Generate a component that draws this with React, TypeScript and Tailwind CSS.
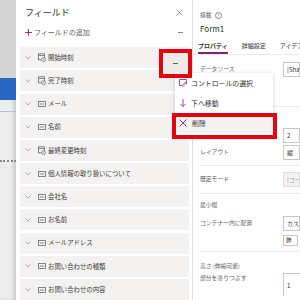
import React from "react";

type Field = {
    label: string;
    kind: "text" | "date";
}

const fields: Field[] = [
    { label: "開始時刻", kind: "date" },
    { label: "完了時刻", kind: "date" },
    { label: "メール", kind: "text" },
    { label: "名前", kind: "text" },
    { label: "最終変更時刻", kind: "date" },
    { label: "個人情報の取り扱いについて", kind: "text" },
    { label: "会社名", kind: "text" },
    { label: "お名前", kind: "text" },
    { label: "メールアドレス", kind: "text" },
    { label: "お問い合わせの種類", kind: "text" },
    { label: "お問い合わせの内容", kind: "text" },
]

const Chevron = () => (
    <svg width="6" height="4" viewBox="0 0 6 4" className="shrink-0">
        <path d="M0.5 0.5 L3 3 L5.5 0.5" fill="none" stroke="#b89bc4" strokeWidth="0.9" />
    </svg>
)

const TextIcon = () => (
    <svg width="8" height="6" viewBox="0 0 8 6" className="shrink-0">
        <rect x="0.5" y="0.5" width="7" height="5" fill="none" stroke="#6b6b6b" strokeWidth="0.8" />
        <path d="M1.8 3 H6.2" stroke="#8a8a8a" strokeWidth="1" />
    </svg>
)

const DateIcon = () => (
    <svg width="8" height="9" viewBox="0 0 8 9" className="shrink-0">
        <rect x="0.5" y="0.8" width="6" height="6" fill="none" stroke="#6b6b6b" strokeWidth="0.8" />
        <path d="M0.5 2.5 H6.5" stroke="#6b6b6b" strokeWidth="0.8" />
        <circle cx="5.6" cy="6.6" r="1.9" fill="#fff" stroke="#6b6b6b" strokeWidth="0.8" />
        <path d="M5.6 5.8 V6.7 H6.3" fill="none" stroke="#6b6b6b" strokeWidth="0.6" />
    </svg>
)

const FieldRow: React.FC<Field> = (props) => {
    return (
        <div className="h-[21px] flex items-center bg-[#f3f2f1] pl-[5px]">
            <Chevron />
            <div className="ml-[6px] w-[10px] flex justify-center">
                {props.kind === "date" ? <DateIcon /> : <TextIcon />}
            </div>
            <span className="ml-[1px] text-[6.4px] text-[#3b3a39] whitespace-nowrap">{props.label}</span>
        </div>
    )
}

const PropRow = (props: { label: string; value?: string; h?: string; muted?: boolean }) => (
    <div className={`flex items-center ${props.h ?? "h-[15px]"}`}>
        <span className="w-[83px] text-[5.8px] text-[#605e5c] whitespace-nowrap">{props.label}</span>
        {props.value !== undefined && (
            <div className={`h-[15px] flex-1 border border-[#c8c6c4] flex items-center pl-[3px] text-[6px] whitespace-nowrap overflow-hidden ${props.muted ? "bg-[#f3f2f1] text-[#a19f9d] border-[#e1dfdd]" : "bg-white text-[#323130]"}`}>
                {props.value}
            </div>
        )}
    </div>
)

const App = () => {
    return (
        <div className="relative w-[300px] h-[300px] overflow-hidden flex bg-white font-['Noto_Sans_CJK_JP',sans-serif]">
            {/* app behind the panel */}
            <div className="w-[16px] shrink-0 flex flex-col bg-[#ececec] shadow-[inset_-3px_0_3px_rgba(0,0,0,0.12)]">
                <div className="h-[78px] bg-[#d5d5d5]" />
                <div className="h-[22px] bg-[#2a67c2]" />
                <div className="h-[12px] border-b border-[#a9c3e6]" />
                <div className="h-[50px] border-b-2 border-dotted border-[#8a8a8a]" />
                <div className="h-[12px] text-[6px] text-[#333] leading-[12px] -ml-[6px]">■</div>
            </div>

            {/* fields panel */}
            <div className="w-[177px] shrink-0 border-r border-[#e1dfdd] flex flex-col">
                <div className="h-[30px] flex items-center justify-between pl-[9px] pr-[9px]">
                    <span className="text-[9px] text-[#323130]">フィールド</span>
                    <svg width="7" height="7" viewBox="0 0 7 7">
                        <path d="M0.5 0.5 L6.5 6.5 M6.5 0.5 L0.5 6.5" stroke="#8a8886" strokeWidth="0.8" />
                    </svg>
                </div>
                <div className="h-[18px] flex items-center pl-[9px] pr-[9px]">
                    <svg width="7" height="7" viewBox="0 0 7 7">
                        <path d="M3.5 0 V7 M0 3.5 H7" stroke="#742774" strokeWidth="0.9" />
                    </svg>
                    <span className="ml-[2px] text-[7px] text-[#605e5c]">フィールドの追加</span>
                    <span className="ml-auto w-[5px] h-px bg-[#8a8886]" />
                </div>
                <div className="mt-[7px] ml-[4px] mr-[3px] flex flex-col gap-[2.2px]">
                    {fields.map((f) => (
                        <FieldRow key={f.label} label={f.label} kind={f.kind} />
                    ))}
                </div>
            </div>

            {/* properties panel */}
            <div className="flex-1 min-w-0 flex flex-col pt-[8px]">
                <div className="pl-[7px] h-[14px] flex items-center gap-[3px]">
                    <span className="text-[5.8px] text-[#605e5c]">搭載</span>
                    <span className="w-[7px] h-[7px] rounded-full border border-[#8a8886] text-[4.5px] leading-[5px] text-[#605e5c] flex items-center justify-center">?</span>
                </div>
                <div className="pl-[7px] h-[14px] flex items-center text-[8px] text-[#323130]">Form1</div>
                <div className="mt-[2px] pl-[5px] h-[17px] flex items-start gap-[14px] border-b border-[#edebe9] text-[6px] whitespace-nowrap">
                    <div className="h-[16px] flex items-center border-b-2 border-[#742774] font-semibold text-[#323130]">プロパティ</div>
                    <div className="h-[14px] flex items-center text-[#323130]">詳細設定</div>
                    <div className="h-[14px] flex items-center text-[#323130]">アイデア</div>
                </div>
                <div className="pl-[7px] mt-[7px] flex flex-col">
                    <PropRow label="データソース" value="[SharePoint]" h="h-[15px]" />
                    <div className="h-[30px] border-b border-[#edebe9]" />
                    <div className="h-[20px]" />
                    <PropRow label="列" value="2" h="h-[16px]" />
                    <div className="h-[2px]" />
                    <PropRow label="レイアウト" value="縦" h="h-[15px]" />
                    <div className="h-[6px] border-b border-[#edebe9]" />
                    <div className="h-[6px]" />
                    <PropRow label="既定モード" value="[コード]" muted h="h-[15px]" />
                    <div className="h-[7px] border-b border-[#edebe9]" />
                    <div className="h-[4px]" />
                    <div className="h-[14px] flex items-center text-[5.8px] text-[#605e5c]">最小幅</div>
                    <div className="h-[4px]" />
                    <PropRow label="コンテナー内に配置" value="カスタム" h="h-[15px]" />
                    <div className="h-[4px]" />
                    <div className="ml-[83px] w-[15px] h-[11px] border border-[#c8c6c4] text-[5.5px] text-[#323130] flex items-center pl-[2px]">飾</div>
                    <div className="h-[6px] border-b border-[#edebe9]" />
                    <div className="h-[7px]" />
                    <div className="h-[14px] flex items-center text-[5.8px] text-[#605e5c]">高さ (伸縮可能)</div>
                    <div className="h-[8px] flex">
                        <div className="w-[83px]" />
                        <div className="flex-1 border-t border-l border-[#c8c6c4]" />
                    </div>
                    <div className="h-[14px] flex">
                        <span className="w-[83px] -mt-[7px] text-[5.8px] text-[#605e5c] whitespace-nowrap">部分を塗りつぶす</span>
                        <div className="flex-1 border-l border-[#c8c6c4] pl-[3px] text-[6px] text-[#323130]">1</div>
                    </div>
                </div>
            </div>

            {/* context menu */}
            <div className="absolute left-[175px] top-[73px] w-[98px] bg-white shadow-[0_1px_4px_rgba(0,0,0,0.2)] pb-[4px] flex flex-col">
                <div className="h-[20px] flex items-center pl-[4px] gap-[4px]">
                    <svg width="8" height="8" viewBox="0 0 8 8">
                        <path d="M0.5 0.5 H7.5 V5 M0.5 0.5 V6.5 H3" fill="none" stroke="#742774" strokeWidth="0.8" />
                        <path d="M4 7.5 L7.5 4 L6.5 3 L3 6.5 Z" fill="none" stroke="#742774" strokeWidth="0.7" />
                    </svg>
                    <span className="text-[6.9px] text-[#323130] whitespace-nowrap">コントロールの選択</span>
                </div>
                <div className="h-[20px] flex items-center pl-[5px] gap-[5px]">
                    <svg width="6" height="8" viewBox="0 0 6 8">
                        <path d="M3 0 V7.5 M0.5 5 L3 7.5 L5.5 5" fill="none" stroke="#742774" strokeWidth="0.8" />
                    </svg>
                    <span className="text-[6.9px] text-[#323130] whitespace-nowrap">下へ移動</span>
                </div>
                <div className="h-[20px] flex items-center pl-[4px] gap-[5px] bg-[#f3f2f1]">
                    <svg width="8" height="8" viewBox="0 0 8 8">
                        <path d="M0.5 0.5 L7.5 7.5 M7.5 0.5 L0.5 7.5" stroke="#742774" strokeWidth="0.9" />
                    </svg>
                    <span className="text-[6.9px] text-[#323130] whitespace-nowrap">削除</span>
                </div>
            </div>

            {/* highlight boxes */}
            <div className="absolute left-[159px] top-[49px] w-[33px] h-[29px] border-4 border-[#e50012] p-px">
                <div className="w-full h-full bg-[#edebe9] flex items-center justify-center">
                    <span className="w-[5px] h-px bg-[#605e5c]" />
                </div>
            </div>
            <div className="absolute left-[172px] top-[113px] w-[105px] h-[26px] border-4 border-[#e50012]" />
        </div>
    )
}

export default App;
